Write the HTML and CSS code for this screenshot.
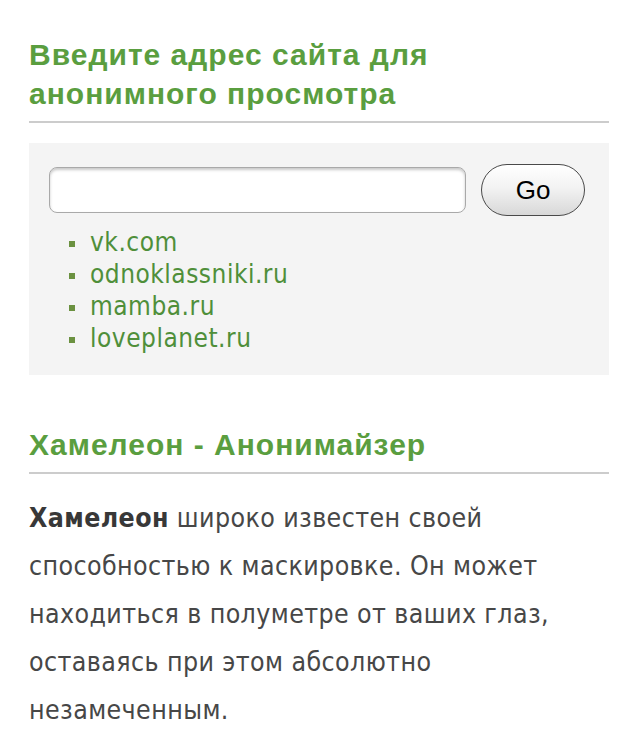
FILE: index.html
```html
<!DOCTYPE html>
<html lang="ru">
<head>
<meta charset="utf-8">
<link rel="stylesheet" href="styles.css">
</head>
<body>
<div class="page">
  <h2 class="title">Введите адрес сайта для<br>анонимного просмотра</h2>
  <div class="box">
    <form class="form">
      <input class="url" type="text">
      <button class="go" type="button">Go</button>
    </form>
    <ul class="sites">
      <li><a href="#">vk.com</a></li>
      <li><a href="#">odnoklassniki.ru</a></li>
      <li><a href="#">mamba.ru</a></li>
      <li><a href="#">loveplanet.ru</a></li>
    </ul>
  </div>
  <h2 class="title title-two">Хамелеон - Анонимайзер</h2>
  <p class="text"><b>Хамелеон</b> широко известен своей способностью к маскировке. Он может находиться в полуметре от ваших глаз, оставаясь при этом абсолютно незамеченным.</p>
</div>
</body>
</html>
```

FILE: styles.css
```css
html, body {
  margin: 0;
  padding: 0;
  background: #fff;
}
.page {
  padding: 35px 30px 0 29px;
}
.title {
  margin: 0;
  font-family: "Liberation Sans", Arial, sans-serif;
  font-weight: bold;
  font-size: 30px;
  letter-spacing: 1px;
  line-height: 39px;
  color: #5a9e3f;
  padding-bottom: 8px;
  border-bottom: 2px solid #cccccc;
}
.box {
  margin-top: 20px;
  background: #f4f4f4;
  padding: 21px 24px 21px 20px;
}
.form {
  display: flex;
  align-items: center;
  gap: 15px;
  margin: 0;
}
.url {
  flex: 1;
  height: 46px;
  box-sizing: border-box;
  border: 1px solid #a9a9a9;
  border-radius: 8px;
  background: #fff;
  box-shadow: inset 0 2px 3px rgba(0,0,0,0.22);
  margin: 0;
}
.go {
  width: 104px;
  height: 52px;
  box-sizing: border-box;
  border: 1.5px solid #4a4a4a;
  border-radius: 26px;
  background: linear-gradient(#ffffff, #f3f3f3 45%, #d8d8d8);
  font-family: "Liberation Sans", Arial, sans-serif;
  font-size: 26px;
  color: #000;
  padding: 0;
  margin: 0;
}
.sites {
  list-style: none;
  margin: 10px 0 0 0;
  padding: 0 0 0 20px;
}
.sites li {
  font-family: "DejaVu Sans Condensed", "DejaVu Sans", sans-serif;
  font-size: 26px;
  letter-spacing: 0.5px;
  line-height: 32px;
  display: flex;
  align-items: center;
  gap: 15px;
}
.sites li::before {
  content: "";
  width: 6px;
  height: 6px;
  margin-top: 3px;
  background: #6b9140;
  flex: none;
}
.sites a {
  color: #4f8f3a;
  text-decoration: none;
}
.title-two {
  margin-top: 50px;
}
.text {
  margin: 20px 0 0 0;
  font-family: "DejaVu Sans Condensed", "DejaVu Sans", sans-serif;
  font-size: 26.5px;
  letter-spacing: 0.4px;
  line-height: 48px;
  color: #474747;
}
.text b {
  color: #383838;
}
```
